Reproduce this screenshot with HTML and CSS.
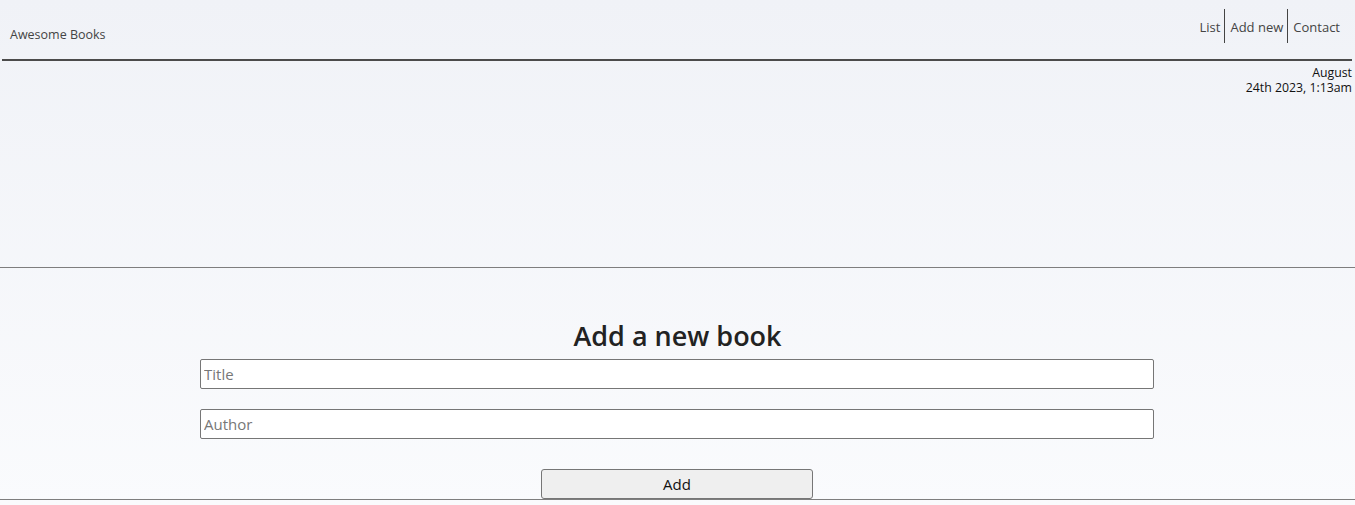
FILE: index.html
```html
<!DOCTYPE html>
<html lang="en">
<head>
<meta charset="utf-8">
<title>Awesome Books</title>
<link rel="stylesheet" href="styles.css">
</head>
<body>
<header class="header">
  <nav class="navbar">
    <span class="logo">Awesome Books</span>
    <ul class="nav-links">
      <li class="nav-item">List</li>
      <li class="nav-item">Add new</li>
      <li class="nav-item">Contact</li>
    </ul>
  </nav>
  <p class="date"><span class="date-line">August</span><span class="date-line">24th 2023, 1:13am</span></p>
</header>
<main class="main">
  <section class="add-section">
    <h2 class="add-title">Add a new book</h2>
    <form class="add-form">
      <input class="field" type="text" placeholder="Title">
      <input class="field" type="text" placeholder="Author">
      <button class="add-btn" type="button">Add</button>
    </form>
  </section>
</main>
</body>
</html>
```
FILE: styles.css
```css
* { box-sizing: border-box; }
html, body { margin: 0; padding: 0; }
body {
  width: 1355px;
  height: 505px;
  overflow: hidden;
  font-family: "Open Sans", "Noto Sans", sans-serif;
  background: linear-gradient(#f0f2f7, #fafbfd);
  color: #222;
}
.header { padding: 0 3px 0 2px; height: 267px; }
.navbar {
  height: 61px;
  display: flex;
  justify-content: space-between;
  align-items: flex-start;
  border-bottom: 2px solid #4b4b4b;
}
.logo {
  font-size: 12.5px;
  color: #444;
  margin: 26px 0 0 8px;
}
.nav-links {
  list-style: none;
  margin: 9px 8px 0 0;
  padding: 0;
  display: flex;
}
.nav-item {
  font-size: 13px;
  color: #444;
  height: 34px;
  display: flex;
  align-items: center;
  padding: 1px 4px 0;
}
.nav-item + .nav-item { border-left: 1px solid #444; padding-left: 5px; }
.date {
  margin: 4px 0 0;
  text-align: right;
  font-size: 12.3px;
  line-height: 15px;
  color: #111;
}
.date-line { display: block; }
.add-section {
  height: 233px;
  border-top: 1px solid #7e7e7e;
  border-bottom: 1px solid #7e7e7e;
  display: flex;
  flex-direction: column;
  align-items: center;
}
.add-title {
  margin: 48px 0 3px;
  font-size: 27px;
  font-weight: 600;
  line-height: 40px;
  color: #222;
}
.add-form {
  display: flex;
  flex-direction: column;
  align-items: center;
}
.field {
  width: 954px;
  height: 30px;
  border: 1px solid #767676;
  border-radius: 2px;
  background: #fff;
  font-family: inherit;
  font-size: 15px;
  padding: 0 3px;
  margin: 0 1px 20px 0;
}
.field::placeholder { color: #777; }
.add-btn {
  margin: 10px 1px 0 0;
  width: 272px;
  height: 30px;
  border: 1px solid #767676;
  border-radius: 3px;
  background: #efefef;
  font-family: inherit;
  font-size: 15px;
  color: #111;
}
```
